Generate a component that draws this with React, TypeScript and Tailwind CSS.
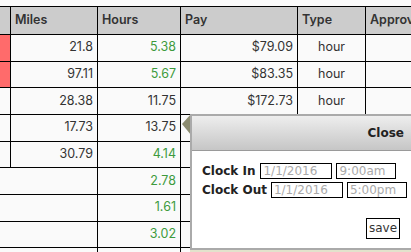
const rows = [
  { flag: true, miles: "21.8", hours: "5.38", ok: true, pay: "$79.09", type: "hour" },
  { flag: true, miles: "97.11", hours: "5.67", ok: true, pay: "$83.35", type: "hour" },
  { flag: false, miles: "28.38", hours: "11.75", ok: false, pay: "$172.73", type: "hour" },
  { flag: false, miles: "17.73", hours: "13.75", ok: false, pay: "", type: "" },
  { flag: false, miles: "30.79", hours: "4.14", ok: true, pay: "", type: "" },
];

const totals = ["2.78", "1.61", "3.02", ""];

const cell = "border-r border-b border-black box-border flex items-center px-[4px] overflow-hidden";
const field = "shrink-0 h-[16px] border border-black px-[2px] leading-[14px] text-[#aaa]";

export default function App() {
  return (
    <div className="relative w-[411px] h-[252px] overflow-hidden bg-[#fafafa] text-[#333] font-['Inter',sans-serif] text-[12.5px]">
      <div className="pt-[6px]">
        <div className="grid grid-cols-[11px_87px_83px_117px_68px_1fr] border-t border-black">
          {/* header */}
          <div className={`${cell} h-[28px] bg-[#cccccc]`} />
          <div className={`${cell} h-[28px] bg-[#cccccc] font-semibold`}>Miles</div>
          <div className={`${cell} h-[28px] bg-[#cccccc] font-semibold`}>Hours</div>
          <div className={`${cell} h-[28px] bg-[#cccccc] font-semibold`}>Pay</div>
          <div className={`${cell} h-[28px] bg-[#cccccc] font-semibold`}>Type</div>
          <div className={`${cell} h-[28px] bg-[#cccccc] font-semibold border-r-0 whitespace-nowrap`}>Approv</div>

          {rows.map((r, i) => (
            <div key={i} className="contents">
              <div className={`${cell} h-[26.67px] ${r.flag ? "bg-[#ff6b6b]" : ""}`} />
              <div className={`${cell} h-[26.67px] justify-end`}>{r.miles}</div>
              <div className={`${cell} h-[26.67px] justify-end ${r.ok ? "text-[#3d9a3d]" : ""}`}>{r.hours}</div>
              <div className={`${cell} h-[26.67px] justify-end`}>{r.pay}</div>
              <div className={`${cell} h-[26.67px] justify-center`}>{r.type}</div>
              <div className={`${cell} h-[26.67px] border-r-0`} />
            </div>
          ))}

          {totals.map((t, i) => (
            <div key={i} className="contents">
              <div className={`${cell} h-[26.67px] col-span-2`} />
              <div className={`${cell} h-[26.67px] justify-end text-[#3d9a3d]`}>{t}</div>
              <div className={`${cell} h-[26.67px]`} />
              <div className={`${cell} h-[26.67px]`} />
              <div className={`${cell} h-[26.67px] border-r-0`} />
            </div>
          ))}
        </div>
      </div>

      {/* clock popup */}
      <svg className="absolute left-[182px] top-[114px]" width="9" height="21" viewBox="0 0 9 21">
        <polygon points="9,0 0,10 9,21" fill="#8c8c70" />
      </svg>
      <div className="absolute left-[190px] top-[114px] w-[224px] h-[136px] border-2 border-[#aaaaaa] bg-white font-['DejaVu_Sans',sans-serif] text-[12px] text-[#222]">
        <div className="h-[35px] flex items-center justify-end pr-[8px] bg-gradient-to-b from-[#eeeeee] to-[#c6c6c6] border-b border-[#9a9a9a] font-bold">
          Close
        </div>
        <div className="pl-[10px] pr-[12px] pt-[12px] flex flex-col">
          <div className="flex items-center gap-[4px] h-[16px] whitespace-nowrap">
            <span className="shrink-0 font-bold mr-[1px]">Clock In</span>
            <span className={`${field} w-[72px]`}>1/1/2016</span>
            <span className={`${field} w-[60px]`}>9:00am</span>
          </div>
          <div className="flex items-center gap-[4px] h-[16px] mt-[3px] whitespace-nowrap">
            <span className="shrink-0 font-bold">Clock Out</span>
            <span className={`${field} w-[72px]`}>1/1/2016</span>
            <span className={`${field} w-[60px]`}>5:00pm</span>
          </div>
          <div className="flex justify-end mt-[20px]">
            <button className="w-[34px] h-[21px] border border-black bg-white text-[#333] leading-[19px]">save</button>
          </div>
        </div>
      </div>
      <div className="absolute left-[190px] top-[250px] w-[224px] h-[2px] bg-[#e2e2cc]" />
    </div>
  );
}
